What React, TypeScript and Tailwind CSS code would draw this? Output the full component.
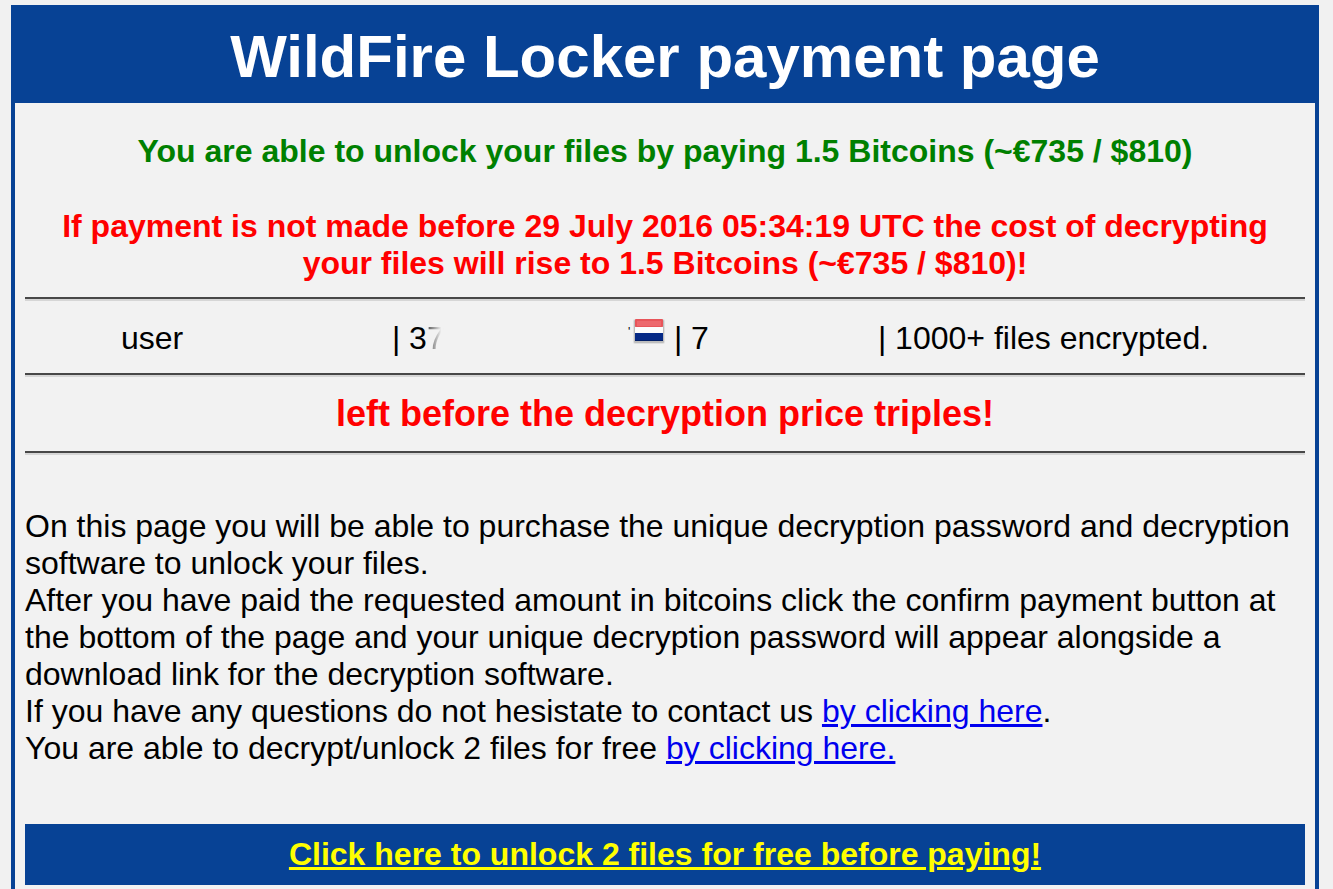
import React from "react";

function Divider() {
  return <hr className="h-[4px] border-t-2 border-b-2 border-t-[#484848] border-b-[#d6d6d6]" />;
}

function DutchFlag() {
  return (
    <svg role="img" aria-label="Netherlands" width="34" height="28" viewBox="0 0 34 28" className="mb-3 shrink-0">
      <rect x="1" y="1" width="32" height="25" rx="2" fill="#000" opacity="0.08" />
      <rect x="2" y="2" width="30" height="23" rx="1" fill="#000" opacity="0.15" />
      <rect x="3" y="1" width="28" height="8" rx="1" fill="#e8555a" />
      <rect x="5" y="3" width="24" height="5" fill="#f0747a" opacity="0.6" />
      <rect x="3" y="9" width="28" height="6" fill="#fcfcfc" />
      <rect x="3" y="15" width="28" height="8" fill="#062a86" />
      <rect x="3" y="22" width="28" height="1" fill="#031f66" />
    </svg>
  );
}

export default function App() {
  return (
    <div className="h-screen overflow-hidden bg-[#f1f1f1] pt-[5px] pr-[14px] pl-[11px] font-['Liberation_Sans',Arial,sans-serif] text-[32px] leading-[37px] text-black">
      <main className="border-4 border-[#074295] bg-[#f2f2f2] pb-20">
        <header className="bg-[#074295] pt-[14px] pb-[12px] text-center text-white">
          <h1 className="text-[60px] leading-[68px] font-bold">WildFire Locker payment page</h1>
        </header>

        <div className="px-[10px] pt-[30px]">
          <div className="text-center font-bold">
            <p className="text-[#008000]">
              You are able to unlock your files by paying 1.5 Bitcoins (~€735 / $810)
            </p>
            <p className="mt-[38px] mb-[15px] text-[#ff0000]">
              If payment is not made before 29 July 2016 05:34:19 UTC the cost of decrypting your files will rise to
              1.5 Bitcoins (~€735 / $810)!
            </p>
          </div>

          <Divider />
          <div className="flex h-[72px] items-center justify-center whitespace-pre pt-[2px]">
            <span className="w-[271px]">user</span>
            <span className="w-[236px]">
              | 3
              <span className="bg-linear-to-r from-[#555555] to-[#f2f2f2] to-80% bg-clip-text text-transparent">7</span>
            </span>
            <span className="h-6 w-[4px] text-[12px] leading-3">'</span>
            <DutchFlag />
            <span className="w-[212px] pl-2">| 7</span>
            <span>| 1000+ files encrypted.</span>
          </div>
          <Divider />
          <p className="py-[16px] text-center text-[36px] leading-[42px] font-bold text-[#ff0000]">
            left before the decryption price triples!
          </p>
          <Divider />

          <div className="mt-[53px]">
            <p>
              On this page you will be able to purchase the unique decryption password and decryption software to
              unlock your files.
            </p>
            <p>
              After you have paid the requested amount in bitcoins click the confirm payment button at the bottom of
              the page and your unique decryption password will appear alongside a download link for the decryption
              software.
            </p>
            <p>
              If you have any questions do not hesistate to contact us{" "}
              <a href="#contact" className="text-[#0000ee] underline">by clicking here</a>.
            </p>
            <p>
              You are able to decrypt/unlock 2 files for free{" "}
              <a href="#free" className="text-[#0000ee] underline">by clicking here.</a>
            </p>
          </div>

          <div className="mt-[57px] bg-[#074295] py-[12px] text-center font-bold">
            <a href="#free" className="text-[#ffff00] underline">
              Click here to unlock 2 files for free before paying!
            </a>
          </div>
        </div>
      </main>
    </div>
  );
}
